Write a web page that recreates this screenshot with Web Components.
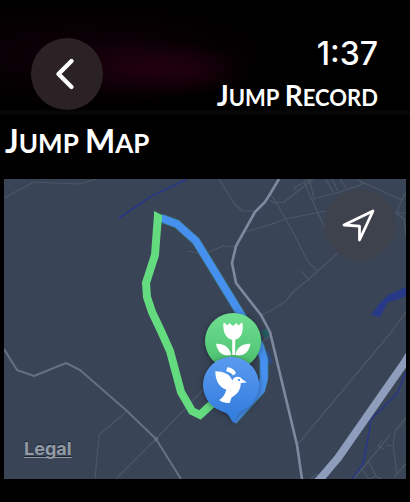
<!DOCTYPE html>
<html lang="en">
<head>
<meta charset="utf-8">
<meta name="viewport" content="width=device-width, initial-scale=1">
<title>Jump Record</title>
<style>
html { background: #000; }
body { margin: 0; color: #fff; font-family: Lato, "Liberation Sans", sans-serif; }
</style>
</head>
<body>
<jump-screen></jump-screen>
<script>
class BaseElement extends HTMLElement {
  connectedCallback() {
    if (!this.shadowRoot) this.attachShadow({ mode: 'open' }).innerHTML = this.template();
  }
}

customElements.define('round-button', class extends BaseElement {
  template() {
    return `<style>
      :host { display: block; }
      button { display: grid; place-items: center; width: 72px; height: 72px; padding: 0; border: 0; border-radius: 50%; background: var(--button-fill, #2b2226); color: #fff; }
    </style>
    <button type="button" aria-label="${this.getAttribute('label')}"><slot></slot></button>`;
  }
});

/* Title set in capitals, the first letter of each word larger. */
customElements.define('caps-title', class extends BaseElement {
  template() {
    const words = this.getAttribute('text').split(' ').map(w => `<span>${w}</span>`).join(' ');
    return `<style>
      :host { display: block; }
      .title { margin: 0; font-size: var(--small, 22px); line-height: 32px; font-weight: 700; white-space: nowrap; }
      span { display: inline-block; text-transform: uppercase; }
      span::first-letter { font-size: var(--large, 28px); line-height: 24px; }
    </style>
    <h2 class="title">${words}</h2>`;
  }
});

customElements.define('watch-header', class extends BaseElement {
  template() {
    return `<style>
      :host { display: block; background:
        radial-gradient(ellipse 90px 32px at 35% 68px, #30001499, transparent),
        radial-gradient(ellipse 60px 26px at 47% 70px, #30001466, transparent),
        radial-gradient(ellipse 200px 56px at 20% 54px, #2000106e, transparent); }
      header { display: flex; justify-content: space-between; align-items: flex-start; padding: 38px 32px 0 31px; }
      .status { display: flex; flex-direction: column; align-items: flex-end; }
      time { font: 500 32px/32px Inter, sans-serif; margin-bottom: 12px; }
      .edge { height: 3px; margin-top: -3px; background: #0b0b0b; filter: blur(1px); }
    </style>
    <header>
      <round-button label="Back">
        <svg width="36" height="36" viewBox="0 0 36 36" fill="none" stroke="#fff" stroke-width="4.4" stroke-linecap="round" stroke-linejoin="round"><path d="M22.5 5 9.5 18l13 13"/></svg>
      </round-button>
      <div class="status"><time>1:37</time><caps-title text="Jump Record"></caps-title></div>
    </header>
    <div class="edge"></div>`;
  }
});

customElements.define('map-pin', class extends BaseElement {
  template() {
    const blue = this.getAttribute('kind') === 'bird';
    const top = blue ? '#5a9af0' : '#70df91', bottom = blue ? '#307bdc' : '#43b968';
    const glyph = blue
      ? `<g transform="translate(1 -3)"><path fill="#fff" d="M12.3 18.2C20 18.5 27 20.5 29.3 27.5 30.5 23.4 36.5 22.3 39 26l4.8 3.5-6 .5c0 6-2.8 11-9.2 14.4l-2 5.6c-4 .2-7.6-.5-10.3-3 3.8-2.8 6-6 7-10.6-6-1.5-11-7.6-11-18.2z"/><path fill="#fff" d="M24.3 14.3c5 .5 8.5 3.6 8.5 6.2l-2.8 2.1c-1.2-2.1-3.4-3.4-6.8-4.3z"/><circle cx="36" cy="27" r="1.1" fill="#3d85e3"/></g>`
      : `<path fill="#fff" d="M19.3 12c.3-2.4 1.5-.9 4.2 1.6L25.4 11l3.6 3.1 3.4-3.1 2 2.6c2.7-2.6 4-4 4.3-1.6.5 8-1 14-7.5 15.8V43h-3V27.8c-7-1.8-9-8-8.9-15.8z"/><path fill="#fff" d="M12 31.8c7.5-.4 13.7 3 15.2 11.2C19.5 44.8 13.7 41 12 31.8zM46.5 31.8c-7.5-.4-13.7 3-15.2 11.2 7.7 1.8 13.5-2 15.2-11.2z"/>`;
    return `<style>
      :host { position: absolute; width: 58px; height: 70px; transform: translate(-50%, -29px); }
      svg { display: block; filter: drop-shadow(0 1px 3px #0006); }
    </style>
    <svg width="58" height="70" viewBox="0 0 58 70" role="img" aria-label="${this.getAttribute('kind')} pin">
      <defs><linearGradient id="g" x1="0" y1="0" x2="0" y2="1"><stop stop-color="${top}"/><stop offset="1" stop-color="${bottom}"/></linearGradient></defs>
      <path fill="url(#g)" d="M29 1a28 28 0 0 1 11 53.8c-3 1.5-5 6-8.8 12.2C28 62 27 57 20 55.5A28 28 0 0 1 29 1z"/>
      ${glyph}
    </svg>`;
  }
});

customElements.define('jump-map', class extends BaseElement {
  template() {
    return `<style>
      :host { display: block; position: relative; margin: 0 4px; aspect-ratio: 67 / 50; background: #394557; overflow: hidden; }
      .tiles { display: block; width: 100%; height: 100%; }
      round-button { --button-fill: #3e424d; position: absolute; right: 10px; top: 10px; }
      a { position: absolute; left: 20px; bottom: 19px; font: 700 18px/22px Inter, sans-serif; color: #929aa6; text-shadow: 0 -1px 1px #1d2531; text-decoration-thickness: 1px; text-underline-offset: 2px; text-decoration-skip-ink: none; }
    </style>
    <svg class="tiles" viewBox="4 179 402 300" preserveAspectRatio="xMidYMid slice" fill="none" stroke-linejoin="round" aria-label="Map of the jump route" role="img">
      <g stroke="#4c5767" stroke-width="1.2">
        <path d="M4 198 34 182 80 184 96 179M219 179l14 23 9 9h13M188 251l15 3 20-8 13 1M246 232l29-9M261 315l9-4 15-9 9-11 15-12 29-26M301 271l7 8"/>
        <path d="M270 193l6 9 17 30 15 30 10 9M270 225l15-6 41-8M270 200l6 4M276 203l8-1 18-14 11-9M294 191l1-4 8-4 6-4M304 182l8 18 13 28M309 179l5 19M312 199l28-7 23-8-6-5M326 179l7 13M332 179l6 12M340 179l6 9M360 181l42 19-6 13 8 6 2 16M396 213h10M402 200l4-8"/>
        <path d="M406 312 389 335M393 330 298 444M127 411l-28 24-4 44M116 479l40-40 47-49M262 342l8-6"/>
        <path d="M406 418l-11 13-2 14 4 29M382 440l-4 6 6 3M390 435l-36 44M386 445l7 1M361 468l8 11M368 461l8 15-6 3M376 476l6 3M394 478l12-15M310 479l8-5M324 479l7-6"/>
      </g>
      <path d="M406 287l-18 8-9 9-8 11 9 2 8-15 9-2 9-4z" fill="#293989"/>
      <path d="M119 218l21-14 10-7 37-18M406 372l-9 22-27 26v7l-7 37-11 15" stroke="#293784" stroke-width="1.6"/>
      <path d="M261 331l8-4 1 7-5 5z" fill="#245b61"/><path d="M267 348l6 14-6 3z" fill="#2d4a83"/>
      <path d="M4 349l13 21 17 6 32-13 14 7 47 41 29 28 25 40" stroke="#667082" stroke-width="2"/><circle cx="156" cy="439" r="2.2" fill="#667082"/>
      <path d="M279 179l-9 15-5 8-10 10-19 34-4 17 4 20 25 32 9 17 27 113 5 34" stroke="#7e899f" stroke-width="2.6"/>
      <path d="M410 354l-5 8-67 96-18 21-5 5" stroke="#8f9dbd" stroke-width="8"/>
      <path d="M161 218l16 6 19 17 44 72 20 33 4 14v18l-3 12-28 31" stroke="#3a757c" stroke-width="9"/>
      <path d="M161 218l16 6 19 17 44 72 20 33 4 14v18l-3 12-28 31" stroke="#4690ef" stroke-width="7.5"/>
      <path d="M154 211l8 4v6h-8z" fill="#65db80"/>
      <path d="M158 215l-3 40-9 28 1 14 5 15 9 19 9 20 11 41 11 19 8 4 14-13" stroke="#65db80" stroke-width="8" stroke-linejoin="miter"/>
    </svg>
    <map-pin kind="tulip" style="left:57%;top:54%"></map-pin>
    <map-pin kind="bird" style="left:56.5%;top:68.7%"></map-pin>
    <round-button label="Center on my location">
      <svg width="36" height="36" viewBox="0 0 36 36" fill="none" stroke="#fff" stroke-width="2.8" stroke-linejoin="round"><path d="M31 4 2 18l15.5 1.2V33z"/></svg>
    </round-button>
    <a href="#legal">Legal</a>`;
  }
});

customElements.define('jump-screen', class extends BaseElement {
  template() {
    return `<style>
      :host { display: block; }
      .section { padding: 13px 5px 20px; --small: 26px; --large: 32px; }
    </style>
    <watch-header></watch-header>
    <main><caps-title class="section" text="Jump Map"></caps-title><jump-map></jump-map></main>`;
  }
});
</script>
</body>
</html>
